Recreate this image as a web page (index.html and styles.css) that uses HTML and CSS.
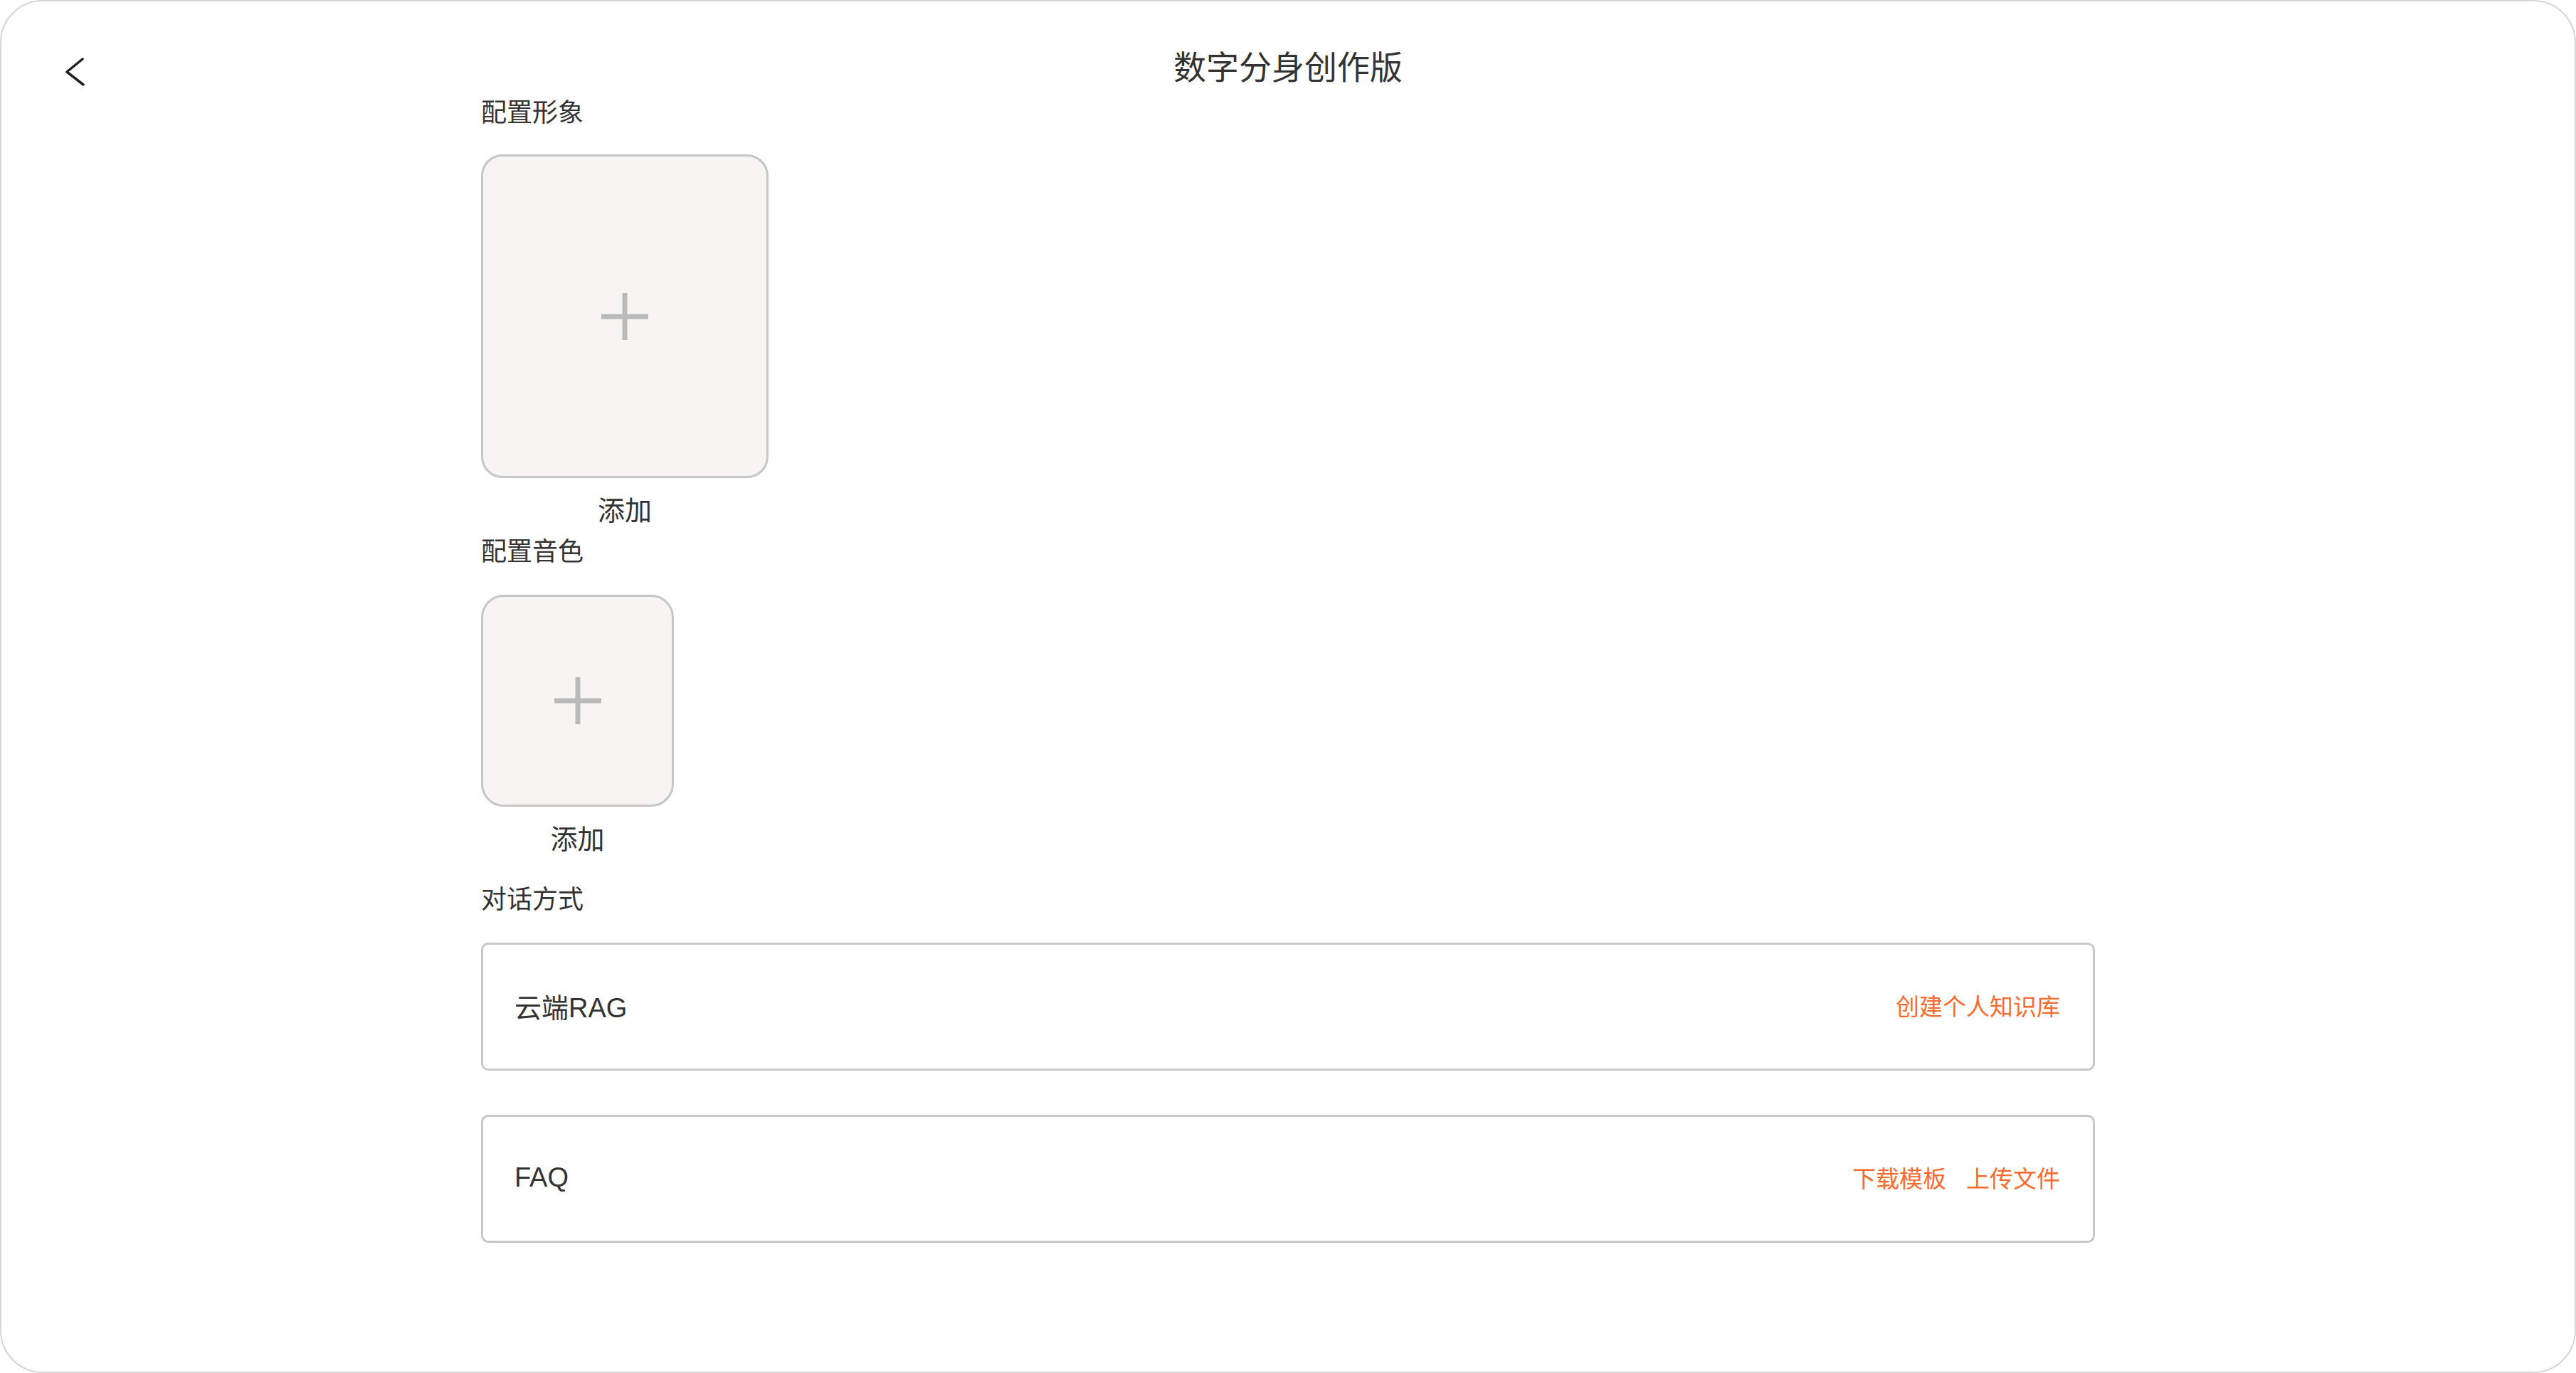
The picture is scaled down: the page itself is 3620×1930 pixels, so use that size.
FILE: index.html
```html
<!DOCTYPE html>
<html lang="zh-CN">
<head>
  <meta charset="utf-8">
  <title>数字分身创作版</title>
  <meta name="viewport" content="width=device-width, initial-scale=1.0">
  <link rel="stylesheet" href="styles.css">
</head>
<body>
  <div class="frame">
    <header class="topbar">
      <button class="back-button" type="button" aria-label="返回">
        <svg width="30" height="40" viewBox="0 0 30 40">
          <polyline points="25,2 3,20 26,38" fill="none" stroke="#222" stroke-width="3.5" stroke-linecap="round" stroke-linejoin="round"/>
        </svg>
      </button>
      <h1 class="page-title">数字分身创作版</h1>
      <div></div>
    </header>

    <main class="content">
      <section class="section section-avatar">
        <h2 class="section-label">配置形象</h2>
        <div class="picker">
          <div class="picker-box picker-avatar">
            <svg width="70" height="70" viewBox="0 0 70 70">
              <path d="M35 2V68M2 35H68" stroke="#bababa" stroke-width="7"/>
            </svg>
          </div>
          <span class="picker-caption">添加</span>
        </div>
      </section>

      <section class="section section-voice">
        <h2 class="section-label">配置音色</h2>
        <div class="picker">
          <div class="picker-box picker-voice">
            <svg width="70" height="70" viewBox="0 0 70 70">
              <path d="M35 2V68M2 35H68" stroke="#bababa" stroke-width="7"/>
            </svg>
          </div>
          <span class="picker-caption">添加</span>
        </div>
      </section>

      <section class="section section-chat">
        <h2 class="section-label">对话方式</h2>
        <div class="mode-list">
          <div class="mode-card">
            <span class="mode-name">云端RAG</span>
            <div class="mode-actions">
              <a href="#" class="mode-link">创建个人知识库</a>
            </div>
          </div>
          <div class="mode-card">
            <span class="mode-name">FAQ</span>
            <div class="mode-actions">
              <a href="#" class="mode-link">下载模板</a>
              <a href="#" class="mode-link">上传文件</a>
            </div>
          </div>
        </div>
      </section>
    </main>
  </div>
</body>
</html>
```

FILE: styles.css
```css
* {
  box-sizing: border-box;
}
html, body {
  margin: 0;
  padding: 0;
  background: #ffffff;
}
body {
  font-family: "Liberation Sans", "Noto Sans CJK SC", sans-serif;
  color: #333333;
}
.frame {
  height: 100vh;
  border: 2px solid #d6d6d6;
  border-radius: 60px;
  background: #ffffff;
  overflow: hidden;
}

/* top bar */
.topbar {
  display: grid;
  grid-template-columns: 1fr auto 1fr;
  align-items: center;
  height: 64px;
  margin-top: 58px;
}
.back-button {
  justify-self: start;
  display: flex;
  margin: 14px 0 0 89px;
  padding: 0;
  border: none;
  background: none;
  cursor: pointer;
}
.page-title {
  margin: 0;
  padding-top: 3px;
  font-size: 46px;
  line-height: 64px;
  font-weight: normal;
  color: #333333;
}

/* content column */
.content {
  width: 2268px;
  margin: 0 auto;
}
.section-label {
  margin: 0;
  font-size: 36px;
  line-height: 48px;
  font-weight: normal;
  color: #333333;
}
.section-avatar {
  margin-top: 11px;
}
.section-avatar .picker {
  margin-top: 34px;
}
.section-voice {
  margin-top: 10px;
}
.section-chat {
  margin-top: 37px;
}

/* image / voice pickers */
.picker {
  display: inline-flex;
  flex-direction: column;
  align-items: center;
  margin-top: 36px;
}
.picker-box {
  display: flex;
  align-items: center;
  justify-content: center;
  background: #f6f5f4;
  border: 3px solid #c6c6c6;
  cursor: pointer;
}
.picker-avatar {
  width: 404px;
  height: 455px;
  border-radius: 30px;
}
.picker-voice {
  width: 271px;
  height: 298px;
  border-radius: 32px;
}
.picker-caption {
  margin-top: 22px;
  font-size: 38px;
  line-height: 48px;
  color: #333333;
}

/* chat modes */
.mode-list {
  display: flex;
  flex-direction: column;
  gap: 62px;
  margin-top: 36px;
}
.mode-card {
  display: flex;
  align-items: center;
  justify-content: space-between;
  height: 180px;
  padding: 0 46px 4px 44px;
  border: 3px solid #c8c8c8;
  border-radius: 10px;
}
.mode-name {
  font-size: 38px;
  color: #333333;
}
.mode-actions {
  display: flex;
  gap: 28px;
}
.mode-link {
  font-size: 33px;
  color: #fa6a2d;
  text-decoration: none;
}
```
